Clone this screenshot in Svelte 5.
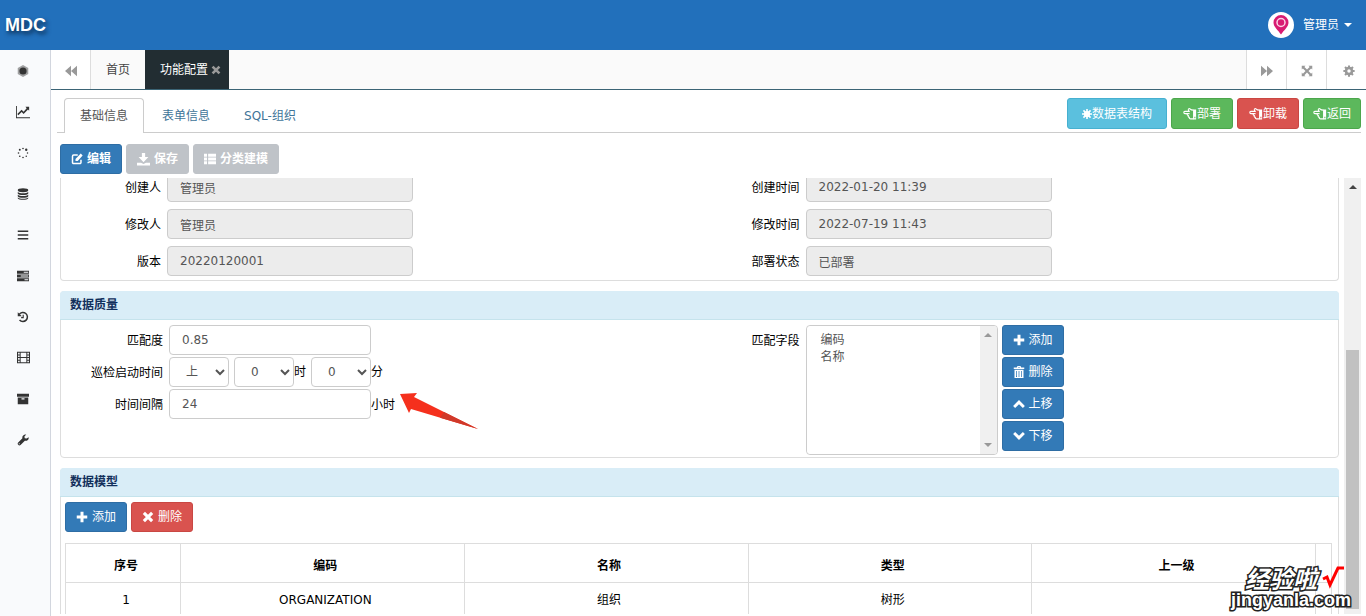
<script>
import { onMount } from 'svelte'

let scroller
let match = $state('0.85')
let interval = $state('24')

const sideItems = ['hex', 'chart', 'spinner', 'database', 'bars', 'server', 'history', 'film', 'archive', 'wrench']
const tabs = ['基础信息', '表单信息', 'SQL-组织']

const actions = [
  { icon: 'burst', text: '数据表结构', cls: 'info' },
  { icon: 'hand', text: '部署', cls: 'success' },
  { icon: 'hand', text: '卸载', cls: 'danger' },
  { icon: 'hand', text: '返回', cls: 'success back' }
]

const fields = [
  ['创建人', '管理员'],
  ['创建时间', '2022-01-20 11:39'],
  ['修改人', '管理员'],
  ['修改时间', '2022-07-19 11:43'],
  ['版本', '20220120001'],
  ['部署状态', '已部署']
]

const moves = [
  ['plus', '添加'],
  ['trash', '删除'],
  ['up', '上移'],
  ['down', '下移']
]

onMount(() => {
  scroller.scrollTop = 6
})
</script>

{#snippet icon(name)}
  <svg class="icon {name}" viewBox="0 0 16 16" aria-hidden="true">
    {#if name === 'hex'}
      <path d="M8 0l7 4v8l-7 4-7-4V4z" opacity=".45" />
      <circle cx="8" cy="8" r="4.8" />
    {:else if name === 'chart'}
      <path d="M0 1h1v13h15v1H0zM15 2v4.5l-1.3-1.3-5 5-2.3-2.2-3.700 3.7-1.2-1.3L6.400 5.500l2.300 2.200 3.500-3.900L10.800 2z" />
    {:else if name === 'spinner'}
      <circle cx="8" cy="2" r="1.1" /><circle cx="12.3" cy="3.7" r="1.6" /><circle cx="14" cy="8" r="1" />
      <circle cx="12.3" cy="12.3" r="1" /><circle cx="8" cy="14" r="1.1" /><circle cx="3.7" cy="12.3" r="1.1" />
      <circle cx="2" cy="8" r="1.1" /><circle cx="3.7" cy="3.7" r="1.3" />
    {:else if name === 'database'}
      <ellipse cx="8" cy="3" rx="7" ry="2.6" />
      <path d="M1 5.2c2 2.2 12 2.2 14 0v2c-1 2.700-13 2.700-14 0zM1 9c2 2.200 12 2.200 14 0v2c-1 2.700-13 2.700-14 0zM1 12.700c2 2.200 12 2.200 14 0v1c-1 2.700-13 2.700-14 0z" />
    {:else if name === 'bars'}
      <path d="M1 2h14v2H1zM1 7h14v2H1zM1 12h14v2H1z" />
    {:else if name === 'server'}
      <path fill-rule="evenodd" d="M0 1h16v4H0zm9 1.300v1.400h6V2.300zM0 6h16v4H0zm5 1.300v1.400h10V7.300zM0 11h16v4H0zm10 1.300v1.400h5v-1.400z" />
    {:else if name === 'history'}
      <path d="M3 4.5A6 6 0 1 1 3.400 12" fill="none" stroke="currentColor" stroke-width="2" />
      <path d="M1 1.500V7h5.500zM7.500 5H9v4.500H5.500V8h2z" />
    {:else if name === 'film'}
      <path fill-rule="evenodd" d="M0 1h16v14H0zm1.300 1.300v2h2v-2zm0 3.200v2h2v-2zm0 3.200v2h2v-2zm0 3.200v2h2v-2zM4.500 2.300v5h7v-5zm0 6.400v5h7v-5zM12.700 2.300v2h2v-2zm0 3.200v2h2v-2zm0 3.200v2h2v-2zm0 3.200v2h2v-2z" />
    {:else if name === 'archive'}
      <path fill-rule="evenodd" d="M0 1h16v4H0zM1 6h14v9H1zm5 1v1.500h4V7z" />
    {:else if name === 'wrench'}
      <path d="M15.500 4.300c.7 3-2 5.500-5 4.700L4.700 14.800c-2 1.600-4.900-1-3.400-3.300L7.200 5.600C6.500 2.500 9.300 0 12.300.7L9.900 3.200l.4 2.300 2.500.5z" />
      <circle cx="3" cy="13" r=".8" fill="#f9fafc" />
    {:else if name === 'rewind'}
      <path d="M8 1v14L0 8zM16 1v14L8 8z" />
    {:else if name === 'forward'}
      <path d="M0 1l8 7-8 7zM8 1l8 7-8 7z" />
    {:else if name === 'expand'}
      <path d="M1 1h5L4.500 2.500 8 6l3.500-3.500L10 1h5v5l-1.500-1.500L10 8l3.500 3.500L15 10v5h-5l1.500-1.500L8 10l-3.500 3.500L6 15H1v-5l1.500 1.500L6 8 2.500 4.500 1 6z" />
    {:else if name === 'gear'}
      <circle cx="8" cy="8" r="4" fill="none" stroke="currentColor" stroke-width="3.400" />
      <path d="M8 .5v3M8 12.500v3M.5 8h3M12.500 8h3M2.700 2.700l2 2M11.300 11.300l2 2M2.700 13.300l2-2M11.300 4.700l2-2" stroke="currentColor" stroke-width="2.800" />
    {:else if name === 'burst'}
      <circle cx="8" cy="8" r="5" />
      <path d="M8 0v16M0 8h16M2.300 2.300l11.400 11.400M13.700 2.300L2.300 13.700" stroke="currentColor" stroke-width="2.600" />
    {:else if name === 'hand'}
      <path d="M12 3.500C10.500 3.500 9 3.300 8.300 2.400 7.300 1.300 5.700 2 6.200 3.400L7 5H2.200C.6 5 .6 7.500 2.200 7.500H5M7.500 7.500H5c-.7.9 0 2.200 1 2.200-.3 1 .2 2 1.200 2-.2 1 .5 1.800 1.500 1.800H12" fill="none" stroke="currentColor" stroke-width="1.300" />
      <path fill-rule="evenodd" d="M11.500 2.800H15v11.400h-3.500zm1.500 8.400v1.600h1.200v-1.600z" />
    {:else if name === 'edit'}
      <path d="M9 2.700H3.500A1.500 1.500 0 0 0 2 4.200v8.300A1.500 1.500 0 0 0 3.500 14h8.300a1.500 1.500 0 0 0 1.500-1.500V9" fill="none" stroke="currentColor" stroke-width="2" />
      <path d="M13 .8l2.500 2.500L9 10.500H6V8z" />
    {:else if name === 'download'}
      <path d="M6 0h4v5h4l-6 6.500L2 5h4z" />
      <path d="M0 12h5l3 1.500 3-1.500h5v3.500H0z" />
    {:else if name === 'list'}
      <path d="M0 1h4v4H0zM5.500 1H16v4H5.500zM0 6h4v4H0zM5.500 6H16v4H5.500zM0 11h4v4H0zM5.500 11H16v4H5.500z" />
    {:else if name === 'plus'}
      <path d="M6 1h4v5h5v4h-5v5H6v-5H1V6h5z" />
    {:else if name === 'trash'}
      <path fill-rule="evenodd" d="M5 2l1-2h4l1 2h4v2H1V2zm1.500 0h3L9 1.200H7zM2 5h12v11H2zm2.300 1.500v8h1v-8zm3.200 0v8h1v-8zm3.200 0v8h1v-8z" />
    {:else if name === 'up'}
      <path d="M1.500 12L8 5.500l6.500 6.500" fill="none" stroke="currentColor" stroke-width="3.800" />
    {:else if name === 'down'}
      <path d="M1.500 4L8 10.500 14.500 4" fill="none" stroke="currentColor" stroke-width="3.800" />
    {:else if name === 'times'}
      <path d="M2.500 2.500l11 11M13.500 2.500l-11 11" fill="none" stroke="currentColor" stroke-width="4.200" />
    {/if}
  </svg>
{/snippet}

<div class="page">
  <header>
    <a class="logo" href="#home">MDC</a>
    <button class="user">
      <svg class="avatar" viewBox="0 0 26 26" aria-hidden="true">
        <circle cx="13" cy="13" r="13" fill="#fff" />
        <path d="M13 22.500C10 18 5.500 15 5.500 10.500a7.500 7.500 0 0 1 15 0c0 4.500-4.500 7.500-7.500 12z" fill="#d81b72" />
        <circle cx="13" cy="10.500" r="4" fill="none" stroke="#fbd3e5" stroke-width="1.500" />
      </svg>
      管理员
      <span class="caret"></span>
    </button>
  </header>

  <div class="body">
    <nav class="side">
      {#each sideItems as name}
        <a href="#{name}" aria-label={name}>{@render icon(name)}</a>
      {/each}
    </nav>

    <main>
      <div class="pagetabs">
        <button class="ctl" aria-label="rewind">{@render icon('rewind')}</button>
        <a class="ptab" href="#index">首页</a>
        <a class="ptab on" href="#config">功能配置{@render icon('times')}</a>
        <span class="fill"></span>
        <button class="ctl" aria-label="forward">{@render icon('forward')}</button>
        <button class="ctl" aria-label="expand">{@render icon('expand')}</button>
        <button class="ctl last" aria-label="settings">{@render icon('gear')}</button>
      </div>

      <div class="navtabs">
        {#each tabs as tab, i}
          <a href="#tab{i}" class:active={i === 0}>{tab}</a>
        {/each}
        <div class="actions">
          {#each actions as a}
            <button class="btn {a.cls}">{@render icon(a.icon)}{a.text}</button>
          {/each}
        </div>
      </div>

      <div class="toolbar">
        <button class="btn primary bold">{@render icon('edit')}编辑</button>
        <button class="btn off bold">{@render icon('download')}保存</button>
        <button class="btn off bold">{@render icon('list')}分类建模</button>
      </div>

      <div class="view">
        <div class="scroller" bind:this={scroller}>
          <section class="panel first">
            {#each fields as [label, value], i}
              <div class="field">
                <label for="f{i}">{label}</label>
                <input id="f{i}" class="wide" {value} disabled />
              </div>
            {/each}
          </section>

          <section class="panel quality">
            <h3>数据质量</h3>
            <div class="cols">
              <div class="left">
                <div class="field">
                  <label for="match">匹配度</label>
                  <input id="match" bind:value={match} />
                </div>
                <div class="field">
                  <label for="half">巡检启动时间</label>
                  <div class="times">
                    <select id="half"><option>上</option><option>下</option></select>
                    <span><select aria-label="时"><option>0</option></select>时</span>
                    <span><select aria-label="分"><option>0</option></select>分</span>
                  </div>
                </div>
                <div class="field">
                  <label for="interval">时间间隔</label>
                  <input id="interval" bind:value={interval} /><span class="unit">小时</span>
                </div>
              </div>
              <div class="right">
                <label for="cols">匹配字段</label>
                <div class="listbox">
                  <select id="cols" multiple>
                    <option>编码</option>
                    <option>名称</option>
                  </select>
                  <div class="minibar"><span class="tri"></span><span class="tri flip"></span></div>
                </div>
                <div class="moves">
                  {#each moves as [name, text]}
                    <button class="btn primary">{@render icon(name)}{text}</button>
                  {/each}
                </div>
              </div>
            </div>
            <!-- red pointer at the time fields -->
            <svg class="pointer" viewBox="0 0 80 38" aria-hidden="true">
              <path d="M0 1L17 0l-3 4L78 36 11 16 9 20z" fill="#f5301d" />
              <path d="M44 19L78 36 40 24.700z" fill="#d0392a" />
            </svg>
          </section>

          <section class="panel">
            <h3>数据模型</h3>
            <div class="model">
              <div class="row">
                <button class="btn primary">{@render icon('plus')}添加</button>
                <button class="btn danger">{@render icon('times')}删除</button>
              </div>
              <table>
                <thead>
                  <tr><th class="no">序号</th><th>编码</th><th>名称</th><th>类型</th><th>上一级</th><th class="end"></th></tr>
                </thead>
                <tbody>
                  <tr><td>1</td><td>ORGANIZATION</td><td>组织</td><td>树形</td><td></td><td></td></tr>
                </tbody>
              </table>
            </div>
          </section>
        </div>
        <div class="bar">
          <span class="tri dark"></span>
          <div class="thumb"></div>
        </div>
      </div>
    </main>
  </div>

  <div class="mark">
    <div class="cn">
      经验啦
      <svg class="tick" viewBox="0 0 24 24" aria-hidden="true">
        <path d="M2 13l4-2 3 8L17 2h6" fill="none" stroke="#f00" stroke-width="3" />
      </svg>
    </div>
    <div class="en">jingyanla.com</div>
  </div>
</div>

<style>
:global(body) {
  margin: 0;
  background: #fff;
}

.page {
  height: 100vh;
  display: flex;
  flex-direction: column;
  overflow: hidden;
  position: relative;
  font-family: "DejaVu Sans", "Noto Sans CJK SC", sans-serif;
  font-size: 12px;
  line-height: 18px;
  color: #000;
}

.page * {
  box-sizing: border-box;
}

a {
  text-decoration: none;
  color: inherit;
}

button, input, select {
  font: inherit;
  margin: 0;
}

.icon {
  width: 12px;
  height: 12px;
  fill: currentColor;
  flex: none;
}

header {
  flex: none;
  height: 50px;
  background: #2270bb;
  display: flex;
  align-items: center;
  justify-content: space-between;
  padding: 0 14px 0 5px;
}
.logo {
  font: bold 18px "Liberation Sans", sans-serif;
  color: #fff;
  text-shadow: 2px 3px 4px #0a2a4c;
}
.user {
  display: flex;
  align-items: center;
  border: 0;
  background: none;
  color: #fff;
  padding: 0;
}
.avatar {
  width: 26px;
  height: 26px;
  margin-right: 9px;
}
.caret {
  border: 4px solid transparent;
  border-top-color: #fff;
  border-bottom: 0;
  margin-left: 5px;
}

.body {
  flex: 1;
  min-height: 0;
  display: flex;
}
.side {
  flex: none;
  width: 51px;
  background: #f9fafc;
  border-right: 1px solid #d2d6de;
  display: flex;
  flex-direction: column;
}
.side a {
  height: 41px;
  display: flex;
  align-items: center;
  justify-content: center;
  color: #333;
  padding-right: 4px;
}
.side .chart {
  width: 14px;
  height: 14px;
}
.side .film {
  width: 13px;
  height: 13px;
}

main {
  flex: 1;
  min-width: 0;
  display: flex;
  flex-direction: column;
}

.pagetabs {
  flex: none;
  display: flex;
  height: 40px;
  background: #fafafa;
  border-bottom: 1px solid #3b6475;
}
.ctl {
  width: 40px;
  display: flex;
  align-items: center;
  justify-content: center;
  padding: 3px 0 0;
  background: #fff;
  border: 0;
  border-left: 1px solid #ddd;
  color: #999;
}
.ctl:first-child {
  border-left: 0;
  border-right: 1px solid #ddd;
}
.ctl.last {
  padding-left: 4px;
}
.ptab {
  display: flex;
  align-items: center;
  padding: 0 15px;
  color: #444;
}
.ptab.on {
  background: #222d32;
  color: #fff;
  padding: 0 8px 0 15px;
}
.ptab .icon {
  width: 10px;
  height: 10px;
  color: #999;
  margin-left: 3px;
}
.fill {
  flex: 1;
}

.navtabs {
  flex: none;
  display: flex;
  align-items: flex-end;
  gap: 2px;
  height: 43px;
  margin: 0 5px 0 6px;
  padding-left: 7px;
  border-bottom: 1px solid #ccc;
}
.navtabs a {
  height: 35px;
  padding: 8px 15px;
  border: 1px solid transparent;
  border-bottom: 0;
  border-radius: 4px 4px 0 0;
  color: #3f7599;
  margin-bottom: -1px;
}
.navtabs a.active {
  background: #fff;
  border-color: #ccc;
  color: #555;
}
.actions {
  margin-left: auto;
  display: flex;
  gap: 4px;
  padding-bottom: 3px;
}
.actions .btn {
  height: 31px;
  gap: 0;
  padding: 0 11px;
}
.actions .btn.info {
  padding: 0 14px;
}
.actions .btn.back {
  padding: 0 9px;
}
.actions .icon {
  width: 14px;
  height: 14px;
}
.actions .burst {
  width: 10px;
  height: 10px;
}

.btn {
  display: inline-flex;
  align-items: center;
  gap: 4px;
  height: 30px;
  padding: 0 10px;
  border: 1px solid;
  border-radius: 3px;
  color: #fff;
  white-space: nowrap;
}
.primary { background: #337ab7; border-color: #2e6da4; }
.info { background: #5bc0de; border-color: #46b0d0; }
.success { background: #5cb85c; border-color: #4ca64c; }
.danger { background: #d9534f; border-color: #c94743; }
.off { background: #bfc3c8; border-color: #bfc3c8; }
.bold { font-weight: bold; }
.btn .download {
  width: 13px;
  height: 13px;
}

.toolbar {
  flex: none;
  display: flex;
  gap: 4px;
  padding: 11px 9px 4px;
}

.view {
  flex: 1;
  min-height: 0;
  display: flex;
  gap: 5px;
  margin: 0 5px 2px 9px;
}
.scroller {
  flex: 1;
  min-width: 0;
  overflow: hidden;
}
.bar {
  width: 17px;
  background: #f0f0f0;
  padding: 7px 2px 5px;
  display: flex;
  flex-direction: column;
  align-items: center;
  justify-content: space-between;
}
.thumb {
  width: 13px;
  height: 61%;
  background: #c1c1c1;
}
.tri {
  border: 4px solid transparent;
  border-bottom-color: #999;
  border-top: 0;
}
.tri.dark {
  border-bottom-color: #444;
}
.tri.flip {
  transform: rotate(180deg);
}

.panel {
  border: 1px solid #ddd;
  border-radius: 4px;
  margin-bottom: 10px;
}
.panel.first {
  display: grid;
  grid-template-columns: 1fr 1fr;
  row-gap: 7px;
  padding-bottom: 4px;
  border-top: 0;
}
h3 {
  margin: -1px -1px 0;
  padding: 5px 10px;
  font-size: 12px;
  line-height: 18px;
  background: #d9edf7;
  border-bottom: 1px solid #c5e3ec;
  border-radius: 4px 4px 0 0;
  color: #12305c;
}
.field {
  display: flex;
  align-items: center;
}
label {
  width: 100px;
  flex: none;
  margin-right: 6px;
  padding-top: 2px;
  text-align: right;
}
input, select {
  width: 202px;
  height: 30px;
  padding: 0 12px;
  border: 1px solid #ccc;
  border-radius: 4px;
  background: #fff;
  color: #555;
}
.wide {
  width: 246px;
}
input:disabled {
  background: #ececec;
}

.quality {
  position: relative;
}
.cols {
  display: grid;
  grid-template-columns: 1fr 1fr;
  padding: 5px 0 2px;
}
.left {
  display: flex;
  flex-direction: column;
  gap: 2px;
}
.left label {
  width: 102px;
}
.times {
  display: flex;
  gap: 5px;
}
.times select {
  width: 60px;
}
.unit {
  padding-top: 2px;
}
.right {
  display: flex;
  align-items: flex-start;
}
.right label {
  line-height: 28px;
}
.listbox {
  display: flex;
  width: 192px;
  height: 130px;
  border: 1px solid #ccc;
  border-radius: 4px;
  overflow: hidden;
}
.listbox select {
  flex: 1;
  width: auto;
  height: auto;
  border: 0;
  padding: 4px 12px;
  overflow: hidden;
}
.listbox option {
  line-height: 17px;
  min-height: 17px;
  padding: 0 2px;
}
.minibar {
  width: 17px;
  background: #f0f0f0;
  display: flex;
  flex-direction: column;
  align-items: center;
  justify-content: space-between;
  padding: 7px 0;
}
.moves {
  display: flex;
  flex-direction: column;
  gap: 2px;
  margin-left: 4px;
}
.pointer {
  position: absolute;
  left: 339px;
  top: 101px;
  width: 80px;
  height: 38px;
}

.model {
  padding: 5px 6px 4px 4px;
}
.row {
  display: flex;
  gap: 4px;
  margin-bottom: 11px;
}
table {
  width: 100%;
  table-layout: fixed;
  border-collapse: collapse;
}
th, td {
  border: 1px solid #ddd;
  text-align: center;
  padding: 8px 2px 8px 8px;
}
th {
  padding-top: 13px;
  padding-bottom: 7px;
}
.no {
  width: 115px;
}
.end {
  width: 16px;
}

.mark {
  position: absolute;
  right: 15px;
  bottom: 6px;
  color: #fff;
  font-weight: bold;
}
.cn {
  display: flex;
  align-items: center;
  gap: 4px;
  margin-left: 14px;
  font-family: "Noto Sans CJK SC", sans-serif;
  font-size: 24px;
  line-height: 24px;
  font-style: italic;
}
.tick {
  width: 24px;
  height: 24px;
}
.en {
  font-family: "Liberation Sans", sans-serif;
  font-size: 18px;
  line-height: 20px;
}
.cn, .en {
  -webkit-text-stroke: 3px #222;
  paint-order: stroke fill;
}
</style>
